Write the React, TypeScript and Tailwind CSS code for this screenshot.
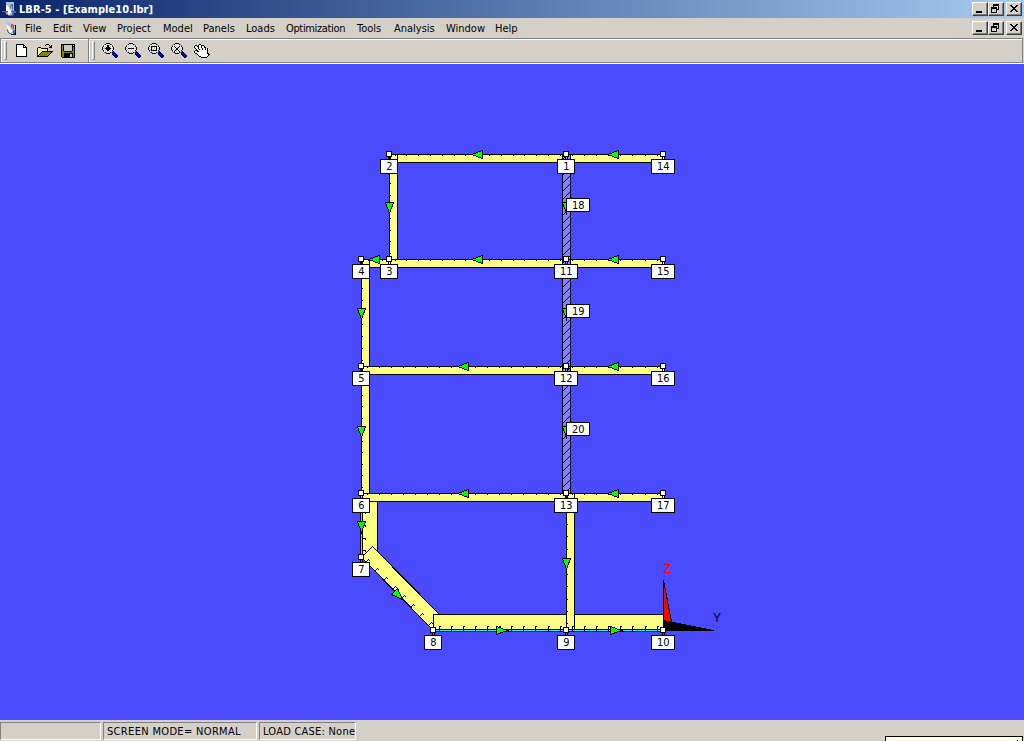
import React from 'react';

const PALETTE: Record<string, string> = {
  '#': '#000000',
  w: '#ffffff',
  y: '#ffff9c',
  o: '#848200',
  n: '#000084',
  g: '#808080',
  s: '#c8c8c8',
  b: '#2f6fb5',
  l: '#9cc8ee',
  r: '#d9532c',
  t: '#ff9a5a',
  d: '#5a6a80',
};

function PixelIcon({ rows, className }: { rows: string[]; className?: string }) {
  const width = Math.max(...rows.map((r) => r.length));
  return (
    <svg
      width={width}
      height={rows.length}
      viewBox={`0 0 ${width} ${rows.length}`}
      shapeRendering="crispEdges"
      className={className}
    >
      {rows.flatMap((row, y) =>
        row.split('').map((c, x) =>
          PALETTE[c] ? <rect key={`${x}-${y}`} x={x} y={y} width={1} height={1} fill={PALETTE[c]} /> : null,
        ),
      )}
    </svg>
  );
}

const NEW_DOC = [
  '########   ',
  '#wwwwww##  ',
  '#wwwwww#w# ',
  '#wwwwww####',
  '#wwwwwwwww#',
  '#wwwwwwwww#',
  '#wwwwwwwww#',
  '#wwwwwwwww#',
  '#wwwwwwwww#',
  '#wwwwwwwww#',
  '#wwwwwwwww#',
  '#wwwwwwwww#',
  '###########',
];

const OPEN = [
  '         ###    ',
  '        #   # # ',
  '             ## ',
  ' ###        ### ',
  '#ywy#######     ',
  '#wywywywyw#     ',
  '#ywywywywy#     ',
  '#wywy###########',
  '#ywy#ooooooooo# ',
  '#wy#ooooooooo#  ',
  '#y#ooooooooo#   ',
  '##ooooooooo#    ',
  '###########     ',
];

const SAVE = [
  '##############',
  '#o#ssssssss#s#',
  '#o#ssssssss###',
  '#o#ssssssss#o#',
  '#o#ssssssss#o#',
  '#o#ssssssss#o#',
  '#o#ssssssss#o#',
  '#oo########oo#',
  '#oooooooooooo#',
  '#oo#########o#',
  '#oo######ss#o#',
  '#oo######ss#o#',
  '#oo######ss#o#',
  ' #############',
];

const lens = (inner: string[]) => [
  '    ####        ',
  '  g#wsws#g      ',
  ` gw${inner[0]}sg     `,
  ` #${inner[1]}#     `,
  `#w${inner[2]}w#    `,
  `#s${inner[3]}s#    `,
  `#w${inner[4]}w#    `,
  ` #${inner[5]}#     `,
  ` gw${inner[6]}wg#    `,
  '  g#swsw#gnnn   ',
  '    ####  nnnn  ',
  '          nnnnn ',
  '           nnnnn',
  '            nnnn',
  '             nn ',
];

const ZOOM_IN = lens(['ws##sw', 'wsw##wsw', 'sw####sw', 's######s', 'sw####sw', 'wsw##wsw', 'swswsw']);
const ZOOM_OUT = lens(['wswsws', 'wswswsws', 'swswswsw', 'w######s', 'swswswsw', 'wswswsws', 'swswsw']);
const ZOOM_BOX = lens(['wswsws', 'w######s', 'w#swsw#w', 'w#swsw#s', 's#wsws#w', 's######s', 'swswsw']);
const ZOOM_ALL = lens(['wswsws', 'w#wsws#s', 'sw#ws#sw', 'wsw##sws', 'sws##wsw', 'ws#sw#ws', '#wsws#']);

const HAND = [
  '     ##         ',
  ' ## #ww###      ',
  '#ww##ww#ww#     ',
  '#www#ww#ww##    ',
  ' #ww#www#ww#w#  ',
  '  #ww#ww#ww#w#  ',
  ' ###wwwwwwwww#  ',
  '#ww##wwwwwwww#  ',
  '#wwwwwwwwwwww#  ',
  ' ##wwwwwwwwww## ',
  '   #wwwwwwwwww##',
  '    #wwwwwwwww# ',
  '     ##wwwwww#  ',
  '       ######   ',
];

const APP_LOGO = [
  '    llllllll   ',
  '    llllllll   ',
  '    lllllrbl   ',
  '    wlllrrbl   ',
  '    wwllrtbl   ',
  '    wwwlrtbl   ',
  '    wwwlltbl   ',
  '    wwwwltll   ',
  '    wwwwwlbl   ',
  'ddddddwwwbbddd ',
  '   drtwwwldddd ',
  '    ttwwllbb   ',
  '    ddllllbb   ',
  '      ddbbb    ',
];

const DOC_LOGO = [
  'lll       ',
  'lllll     ',
  'llllbrl   ',
  'wlllrrbl# ',
  'wwllrrbl# ',
  'wwwlrtbl# ',
  'wwwlttbl# ',
  'rwwwltll# ',
  'rtwwwlbb# ',
  'rtwwwlbb# ',
  ' dtwllbb# ',
  '  ddllbb# ',
  '    ##### ',
];

const BEVEL =
  'flex h-[14px] w-4 items-center justify-center bg-[#d4d0c8] border border-t-white border-l-white border-r-[#404040] border-b-[#404040] shadow-[inset_-1px_-1px_0_#808080]';

function WindowButtons() {
  return (
    <div className="flex">
      <div className={BEVEL}>
        <svg width="14" height="12" shapeRendering="crispEdges">
          <rect x="3" y="8" width="6" height="2" />
        </svg>
      </div>
      <div className={BEVEL}>
        <svg width="14" height="12" shapeRendering="crispEdges">
          <path d="M4 1h6v2h-6zM4 3h1v1h-1zM9 3h1v4h-1zM8 6h1v1h-1zM2 4h6v2h-6zM2 6h1v4h-1zM7 6h1v4h-1zM2 9h6v1h-6z" />
        </svg>
      </div>
      <div className={`${BEVEL} ml-0.5`}>
        <svg width="14" height="12" shapeRendering="crispEdges">
          <path d="M3 2h2v1h-2zM4 3h2v1h-2zM5 4h4v1h-4zM6 5h2v1h-2zM5 6h4v1h-4zM4 7h2v1h-2zM3 8h2v1h-2zM9 2h2v1h-2zM8 3h2v1h-2zM8 7h2v1h-2zM9 8h2v1h-2z" />
        </svg>
      </div>
    </div>
  );
}

const MENU: [string, string][] = [
  ['File', 'w-7'],
  ['Edit', 'w-[30px]'],
  ['View', 'w-[34px]'],
  ['Project', 'w-[46px]'],
  ['Model', 'w-10'],
  ['Panels', 'w-[43px]'],
  ['Loads', 'w-10'],
  ['Optimization', 'w-[71px] tracking-[-0.35px]'],
  ['Tools', 'w-[37px]'],
  ['Analysis', 'w-[52px]'],
  ['Window', 'w-[49px]'],
  ['Help', 'w-8'],
];

function Grip() {
  return <div className="h-[19px] w-[3px] border border-t-white border-l-white border-r-[#808080] border-b-[#808080]" />;
}

const NODES: [number, number, number][] = [
  [1, 566, 154], [2, 389, 154], [14, 663, 154],
  [4, 361, 259], [3, 389, 259], [11, 566, 259], [15, 663, 259],
  [5, 361, 366], [12, 566, 366], [16, 663, 366],
  [6, 361, 493], [13, 566, 493], [17, 663, 493],
  [7, 361, 557], [8, 433, 630], [9, 566, 630], [10, 663, 630],
];

const PANEL_TAGS: [number, number][] = [[18, 198], [19, 304], [20, 422]];

// start, end, fixed coordinate, number of stiffeners
const H_TICKS: [number, number, number, number][] = [
  [389, 566, 154, 15], [566, 663, 154, 8],
  [361, 389, 259, 2], [389, 566, 259, 15], [566, 663, 259, 8],
  [361, 566, 366, 17], [566, 663, 366, 8],
  [361, 566, 493, 17], [566, 663, 493, 8],
];
const V_TICKS: [number, number, number, number][] = [
  [154, 259, 389, 9], [259, 366, 361, 9], [366, 493, 361, 11], [493, 630, 566, 11],
];

const spread = (a: number, b: number, n: number) =>
  Array.from({ length: n }, (_, i) => Math.floor(a + ((i + 0.5) * (b - a)) / n + 0.2));

const HBAR_Y: [number, number, number][] = [[389, 154, 397], [361, 259, 369], [361, 366, 369], [361, 493, 369]];
const LEFT_ARROWS: [number, number][] = [
  [477, 154], [613, 154], [374, 259], [477, 259], [613, 259], [463, 366], [613, 366], [463, 493], [613, 493],
];
const DOWN_ARROWS: [number, number][] = [
  [389, 202], [566, 202], [361, 308], [566, 308], [361, 426], [566, 426], [361, 521], [566, 558],
];

function Drawing() {
  return (
    <svg
      width="1024"
      height="656"
      viewBox="0 64 1024 656"
      shapeRendering="crispEdges"
      className="block bg-[#4a4aff] font-['DejaVu_Sans_Condensed','DejaVu_Sans',sans-serif] text-[11px]"
    >
      <defs>
        <pattern id="hatch" width="8" height="8" patternUnits="userSpaceOnUse">
          <rect width="8" height="8" fill="#8282ff" />
          {[0, 1, 2, 3, 4, 5, 6, 7].map((i) => (
            <rect key={i} x={i} y={(9 - i) % 8} width="1" height="1" />
          ))}
        </pattern>
      </defs>

      {/* side shell */}
      <g fill="#ffff84">
        <rect x="389" y="155" width="9" height="105" />
        <rect x="361" y="260" width="9" height="234" />
      </g>
      <path d="M389 154h1v105h-1zM397 154h1v105h-1zM361 259h1v234h-1zM369 259h1v107h-1zM369 374h1v119h-1z" />

      {/* decks */}
      {HBAR_Y.map(([x, y, bx]) => (
        <g key={y}>
          <rect x={x + 1} y={y + 1} width={663 - x} height="7" fill="#ffff84" />
          <rect x={x} y={y} width={664 - x} height="1" />
          <rect x={bx} y={y + 8} width={664 - bx} height="1" />
        </g>
      ))}
      <path d="M397 154h1v9h-1zM369 259h1v9h-1z" />

      {/* lower side */}
      <rect x="362" y="501" width="15" height="56" fill="#ffff84" />
      <path d="M377 501h1v51h-1zM369 501h9v1h-9z" />
      <polygon points="361.5,557.5 372.5,546.5 444,619 433.5,630" fill="#ffff84" />
      <path d="M361.5 557.5L372.5 546.5L439.5 614.5M361.5 557.5L433.5 630.5" fill="none" stroke="#000" />
      <path d="M360 496h1v61h-1zM362 496h1v61h-1z" />
      <path d="M361 496h1v61h-1z" fill="#00ffff" />
      {spread(493, 557, 5).map((y) => (
        <path key={y} d={`M362 ${y}h4v2h-1v-1h-3z`} />
      ))}
      {Array.from({ length: 8 }, (_, i) => (
        <path
          key={i}
          d={`M${366 + i * 9} ${561 + i * 9}h1v1h-1zm1 -1h1v1h-1zm1 -1h1v1h-1zm1 1h1v1h-1z`}
        />
      ))}

      {/* double bottom */}
      <rect x="433" y="614" width="231" height="16" fill="#ffff84" />
      <path d="M433 614h231v1h-231zM433 614h1v16h-1zM433 629h230v1h-230zM433 631h230v1h-230z" />
      <rect x="433" y="630" width="230" height="1" fill="#00ffff" />

      <rect x="567" y="494" width="7" height="135" fill="#ffff84" />
      <path d="M566 493h1v136h-1zM574 493h1v136h-1zM566 493h9v1h-9zM566 501h9v1h-9z" />
      {[...spread(433, 566, 11), ...spread(566, 663, 8)].map((x) => (
        <path key={x} d={`M${x} 626h2v1h-1v4h-1z`} />
      ))}

      {/* pillars */}
      <rect x="562" y="154" width="9" height="339" fill="url(#hatch)" />
      <path d="M562 154h1v339h-1zM570 154h1v339h-1zM562 154h9v1h-9zM562 259h9v1h-9zM562 366h9v1h-9z" />

      {H_TICKS.flatMap(([a, b, y, n]) =>
        spread(a, b, n).map((x) => <rect key={`${x}-${y}`} x={x} y={y + 1} width="1" height="1" />),
      )}
      {V_TICKS.flatMap(([a, b, x, n]) =>
        spread(a, b, n).map((y) => <rect key={`${x}-${y}`} x={x + 1} y={y} width="1" height="1" />),
      )}

      {/* local axes of each panel */}
      <g fill="#00ff00" stroke="#000">
        {LEFT_ARROWS.map(([x, y]) => (
          <path key={`${x}-${y}`} d={`M${x - 5.5} ${y + 0.5}L${x + 5.5} ${y - 3.5}V${y + 4.5}Z`} />
        ))}
        {DOWN_ARROWS.map(([x, y]) => (
          <path key={`${x}-${y}`} d={`M${x - 3.5} ${y + 0.5}H${x + 4.5}L${x + 0.5} ${y + 11.5}Z`} />
        ))}
        <path d="M496.5 626.5V634.5L507.5 630.5Z" />
        <path d="M610.5 626.5V634.5L621.5 630.5Z" />
        <path d="M391.5 594.5L397.5 588.5L402.5 599.5Z" />
      </g>

      {/* global axes */}
      <path d="M663.5 580.5L671.5 621.5H663.5Z" fill="#ff0000" stroke="#000" />
      <path d="M663 620L714 630V631H663Z" />
      <text x="663.5" y="573" fill="#ff0000" className="font-['Liberation_Sans',sans-serif] text-[13px]">Z</text>
      <text x="713" y="622" className="font-['Liberation_Sans',sans-serif] text-[12px]">Y</text>

      {NODES.map(([id, x, y]) => {
        const half = id > 9 ? 12 : 9;
        return (
          <g key={id}>
            <path d={`M${x - 1} ${y + 3}h1v2h-1zM${x + 1} ${y + 3}h1v2h-1z`} />
            <rect x={x - 2.5} y={y - 2.5} width="5" height="5" fill="#fff" stroke="#000" />
            <rect x={x - half + 0.5} y={y + 5.5} width={half * 2 - 1} height="14" fill="#fff" stroke="#000" />
            <text x={x + 0.3} y={y + 16} textAnchor="middle">{id}</text>
          </g>
        );
      })}
      {PANEL_TAGS.map(([id, y]) => (
        <g key={id}>
          <rect x="566.5" y={y + 0.5} width="23" height="13" fill="#fff" stroke="#000" />
          <text x="578.3" y={y + 11} textAnchor="middle">{id}</text>
        </g>
      ))}
    </svg>
  );
}

const PANE =
  'flex h-[18px] items-center overflow-hidden whitespace-nowrap border border-t-[#808080] border-l-[#808080] border-r-white border-b-white pl-[3px]';

export default function App() {
  return (
    <div className="flex h-[741px] w-[1024px] flex-col overflow-hidden bg-[#d4d0c8] font-['DejaVu_Sans_Condensed','DejaVu_Sans',sans-serif] text-[11px] leading-none text-black">
      <header className="flex h-[18px] shrink-0 items-center justify-between bg-linear-to-r/srgb from-[#0a246a] to-[#a6caf0] pr-0.5 pl-0.5">
        <div className="flex items-center gap-0.5">
          <PixelIcon rows={APP_LOGO} />
          <h1 className="whitespace-nowrap font-bold tracking-[0.06px] text-white">LBR-5 - [Example10.lbr]</h1>
        </div>
        <WindowButtons />
      </header>

      <nav className="flex h-5 shrink-0 items-center pr-0.5 pl-[7px]">
        <PixelIcon rows={DOC_LOGO} />
        <ul className="ml-2 flex flex-1">
          {MENU.map(([label, style]) => (
            <li key={label} className={`${style} shrink-0 whitespace-nowrap`}>
              {label}
            </li>
          ))}
        </ul>
        <WindowButtons />
      </nav>

      <div className="flex h-[26px] shrink-0 border-b border-white">
        <div className="flex w-[1023px] border border-[#808080] shadow-[inset_0_1px_0_#fff,inset_1px_0_0_#fff]">
          <div className="flex w-[88px] items-center border-r border-[#808080] pl-[3px]">
            <Grip />
            <PixelIcon rows={NEW_DOC} className="ml-[9px]" />
            <PixelIcon rows={OPEN} className="ml-2.5" />
            <PixelIcon rows={SAVE} className="ml-2" />
          </div>
          <div className="flex flex-1 items-center pl-[3px] shadow-[inset_1px_1px_0_#fff]">
            <Grip />
            <PixelIcon rows={ZOOM_IN} className="ml-[7px]" />
            <PixelIcon rows={ZOOM_OUT} className="ml-[7px]" />
            <PixelIcon rows={ZOOM_BOX} className="ml-[7px]" />
            <PixelIcon rows={ZOOM_ALL} className="ml-[7px]" />
            <PixelIcon rows={HAND} className="ml-[7px]" />
          </div>
        </div>
      </div>

      <main className="h-[656px] shrink-0">
        <Drawing />
      </main>

      <footer className="flex h-[21px] shrink-0 gap-0.5 pt-0.5">
        <div className={`${PANE} w-[101px]`} />
        <div className={`${PANE} w-[154px] tracking-[0.33px]`}>SCREEN MODE= NORMAL</div>
        <div className={`${PANE} w-[97px] tracking-[0.23px]`}>LOAD CASE: None</div>
        <div className="mt-3.5 ml-auto mr-px h-[5px] w-[138px] overflow-hidden border border-b-0 border-black bg-[#ffffe1]">
          <div className="mt-[3px] ml-[131px] h-px w-px bg-black" />
        </div>
      </footer>
    </div>
  );
}
